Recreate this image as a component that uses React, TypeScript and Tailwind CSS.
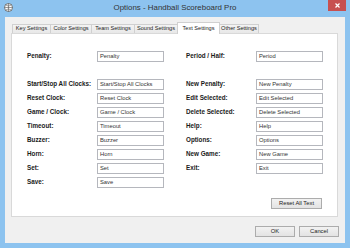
const tabs = [
  { name: "Key Settings", w: "w-[39px]" },
  { name: "Color Settings", w: "w-[42px]" },
  { name: "Team Settings", w: "w-[44px]" },
  { name: "Sound Settings", w: "w-[44px]" },
  { name: "Text Settings", w: "w-[43px]", active: true },
  { name: "Other Settings", w: "w-[40px]" },
];

const leftRows = [
  "Start/Stop All Clocks",
  "Reset Clock",
  "Game / Clock",
  "Timeout",
  "Buzzer",
  "Horn",
  "Set",
  "Save",
];

const rightRows = [
  "New Penalty",
  "Edit Selected",
  "Delete Selected",
  "Help",
  "Options",
  "New Game",
  "Exit",
];

const Row = ({ label, value }: { label: string; value: string }) => (
  <div className="flex items-center h-[11px]">
    <div className="w-[70px] text-[6.3px] font-bold text-[#1a1a1a] leading-none whitespace-nowrap">
      {label}:
    </div>
    <div className="w-[67px] h-[11px] border border-[#b5b7bd] bg-white flex items-center pl-[2px] text-[5.8px] text-[#333] leading-none whitespace-nowrap overflow-hidden">
      {value}
    </div>
  </div>
);

const Column = ({ first, rows }: { first: [string, string]; rows: string[] }) => (
  <div className="flex flex-col">
    <Row label={first[0]} value={first[1]} />
    <div className="flex flex-col gap-[3px] mt-[17px]">
      {rows.map((r) => (
        <Row key={r} label={r} value={r} />
      ))}
    </div>
  </div>
);

const Button = ({ children, w }: { children: string; w: string }) => (
  <div
    className={`${w} h-[11px] border border-[#acacac] bg-gradient-to-b from-[#f2f2f2] to-[#e3e3e3] flex items-center justify-center text-[5.8px] text-[#222] leading-none`}
  >
    {children}
  </div>
);

export default function App() {
  return (
    <div
      className="w-[350px] h-[248px] bg-[#8dc3ef] flex flex-col overflow-hidden"
      style={{ fontFamily: '"Liberation Sans", Arial, sans-serif' }}
    >
      {/* title bar */}
      <div className="relative h-[17px] flex items-center justify-center">
        <svg className="absolute left-[4px] top-[3px]" width="9" height="9" viewBox="0 0 9 9">
          <circle cx="4.5" cy="4.5" r="4" fill="#fff" stroke="#555" strokeWidth="0.8" />
          <path d="M4.5 0.5v8M0.5 4.5h8M1.8 1.8c1.5 1.5 3.9 1.5 5.4 0M1.8 7.2c1.5-1.5 3.9-1.5 5.4 0" stroke="#555" strokeWidth="0.6" fill="none" />
        </svg>
        <div className="text-[7.9px] text-[#333] leading-none pb-[1px]">
          Options - Handball Scoreboard Pro
        </div>
        <div className="absolute right-[4px] top-0 w-[18px] h-[11px] bg-[#c75050] flex items-center justify-center">
          <svg width="5" height="5" viewBox="0 0 5 5">
            <path d="M0.5 0.5l4 4M4.5 0.5l-4 4" stroke="#fff" strokeWidth="1.2" />
          </svg>
        </div>
      </div>

      {/* client area */}
      <div className="mx-[5px] mb-[5px] flex-1 bg-[#f0f0f0] flex flex-col pl-[6px] pr-[7px] pt-[5px]">
        <div className="flex items-end h-[11px] pl-[1px]">
          {tabs.map((t, i) => (
            <div
              key={t.name}
              className={`${t.w} ${i > 0 ? "-ml-px" : ""} ${
                t.active
                  ? "h-[12px] bg-white relative z-10 -mb-px"
                  : "h-[9px] bg-gradient-to-b from-[#f3f3f3] to-[#e8e8e8]"
              } border border-b-0 border-[#d0d0d0] flex items-center justify-center text-[5.6px] text-[#222] leading-none whitespace-nowrap`}
            >
              {t.name}
            </div>
          ))}
        </div>

        <div className="h-[184px] border border-[#d9d9d9] bg-white flex flex-col pl-[15px] pt-[17px]">
          <div className="flex gap-[22px]">
            <Column first={["Penalty", "Penalty"]} rows={leftRows} />
            <Column first={["Period / Half", "Period"]} rows={rightRows} />
          </div>
          <div className="flex justify-end mt-[10px] pr-[15px]">
            <Button w="w-[51px]">Reset All Text</Button>
          </div>
        </div>

        <div className="flex justify-end gap-[4px] mt-[9px] mr-[-1px]">
          <Button w="w-[40px]">OK</Button>
          <Button w="w-[40px]">Cancel</Button>
        </div>
      </div>
    </div>
  );
}
